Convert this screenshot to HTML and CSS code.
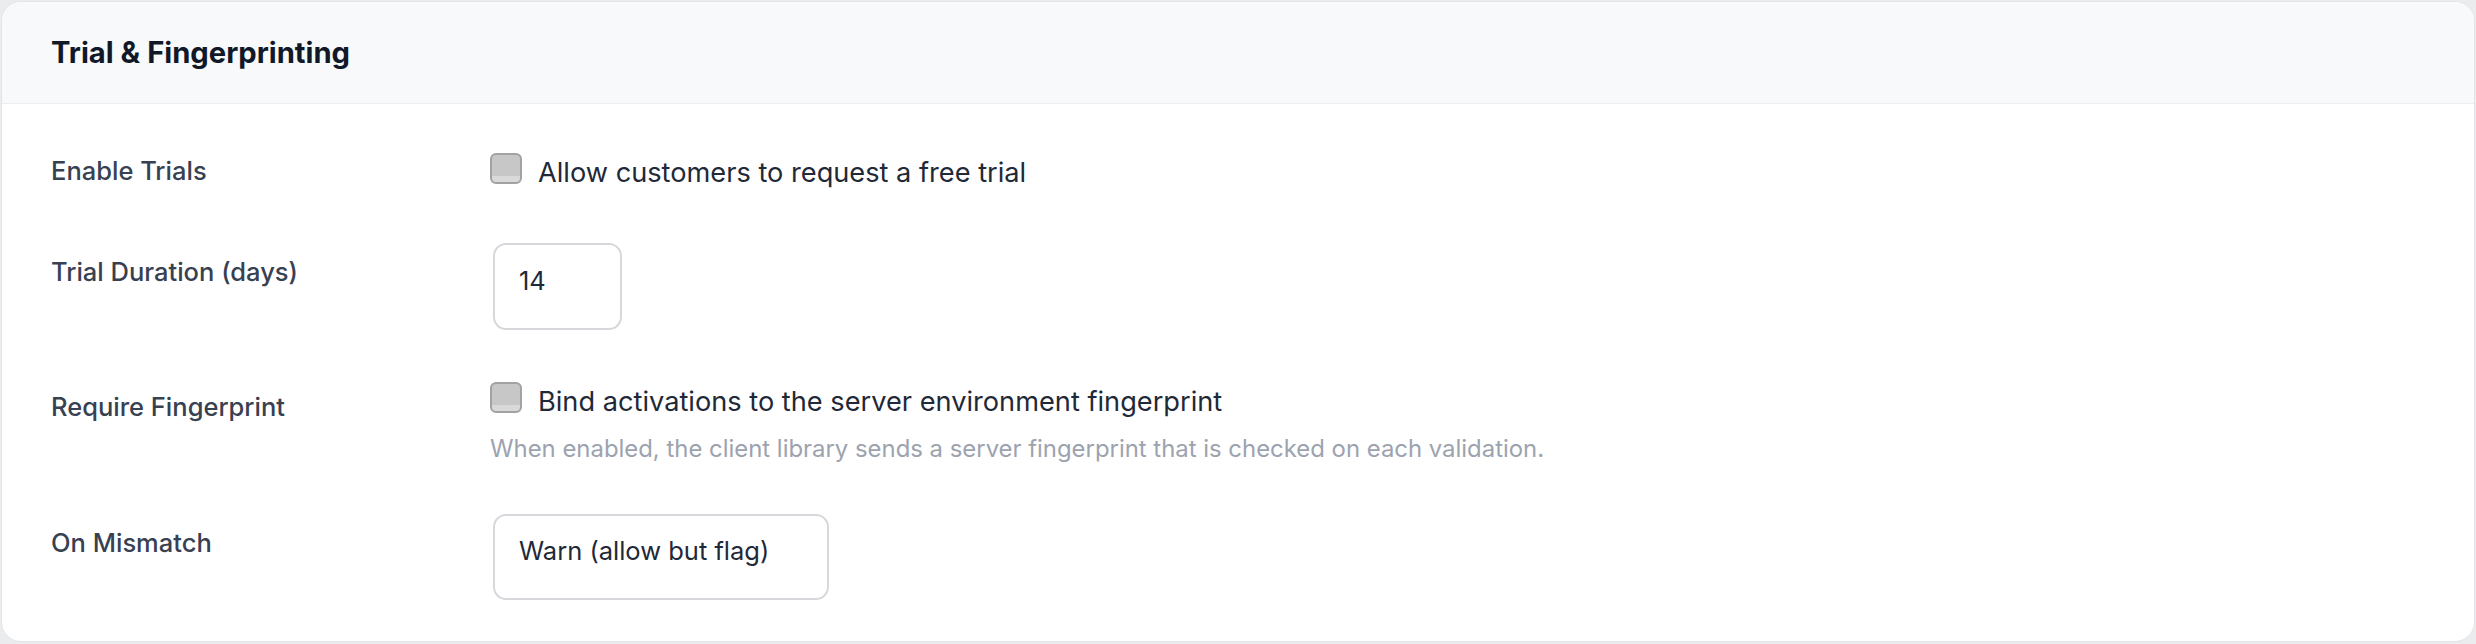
FILE: index.html
```html
<!DOCTYPE html>
<html lang="en">
<head>
<meta charset="utf-8">
<title>Trial &amp; Fingerprinting</title>
<link rel="stylesheet" href="styles.css">
</head>
<body>
<section class="card">
  <header class="card-header">
    <h2 class="card-title">Trial &amp; Fingerprinting</h2>
  </header>
  <div class="card-body">
    <div class="row row-check-first">
      <label class="row-label label-tight">Enable Trials</label>
      <div class="row-control">
        <label class="check-line">
          <span class="checkbox"></span>
          <span class="check-text">Allow customers to request a free trial</span>
        </label>
      </div>
    </div>
    <div class="row">
      <label class="row-label">Trial Duration (days)</label>
      <div class="row-control">
        <input class="field field-number" type="text" value="14">
      </div>
    </div>
    <div class="row row-with-help">
      <label class="row-label label-mid">Require Fingerprint</label>
      <div class="row-control">
        <label class="check-line">
          <span class="checkbox"></span>
          <span class="check-text">Bind activations to the server environment fingerprint</span>
        </label>
        <p class="help">When enabled, the client library sends a server fingerprint that is checked on each validation.</p>
      </div>
    </div>
    <div class="row">
      <label class="row-label">On Mismatch</label>
      <div class="row-control">
        <select class="field field-select">
          <option>Warn (allow but flag)</option>
        </select>
      </div>
    </div>
  </div>
</section>
</body>
</html>
```

FILE: styles.css
```css
* { box-sizing: border-box; }

html, body {
  margin: 0;
  height: 100%;
}

body {
  background: #ebecee;
  padding: 1px 1px 2px 1px;
  font-family: Inter, "Noto Sans", "Liberation Sans", sans-serif;
  color: #1f2937;
}

.card {
  height: 641px;
  background: #ffffff;
  border: 1px solid #e3e5e8;
  border-radius: 20px;
  overflow: hidden;
  display: flex;
  flex-direction: column;
}

.card-header {
  height: 102px;
  background: #f8f9fb;
  border-bottom: 1px solid #eceef1;
  display: flex;
  align-items: center;
  padding: 0 49px;
}

.card-title {
  margin: 0;
  font-size: 29.2px;
  font-weight: 700;
  line-height: 36px;
  color: #111827;
}

.card-body {
  padding: 49px 0 0 49px;
  display: flex;
  flex-direction: column;
  gap: 52px;
}

.row {
  display: grid;
  grid-template-columns: 439px 1fr;
  align-items: start;
}

.row-label {
  font-size: 25.5px;
  font-weight: 500;
  line-height: 32px;
  color: #374151;
  padding-top: 13px;
}

.label-tight { padding-top: 2px; }
.label-mid { padding-top: 9px; }

.row-check-first .check-line { height: 38px; }

.row-with-help { margin-bottom: -1px; }

.row-control {
  display: flex;
  flex-direction: column;
  align-items: flex-start;
}

.check-line {
  display: flex;
  align-items: flex-start;
  gap: 16px;
  height: 36px;
}

.checkbox {
  width: 32px;
  height: 31px;
  border-radius: 6px;
  border: 2px solid #a2a2a2;
  background: linear-gradient(#c7c7c7 0, #c7c7c7 78%, #d9d9d9 78%, #d9d9d9 100%);
  flex: none;
}

.check-text {
  font-size: 27.2px;
  line-height: 36px;
  margin-top: 2px;
  color: #1f2937;
}

.help {
  margin: 16px 0 0 0;
  font-size: 23.9px;
  line-height: 29px;
  color: #9ca3af;
}

.field {
  margin-left: 3px;
  height: 87px;
  border: 2px solid #d6d8dc;
  border-radius: 13px;
  background: #ffffff;
  font-family: inherit;
  font-size: 25.5px;
  line-height: 36px;
  color: #1f2937;
  padding: 17px 24px 30px 24px;
  outline: none;
  appearance: none;
  -webkit-appearance: none;
}

.field-number { width: 129px; }

.field-select { width: 336px; height: 86px; }
```
